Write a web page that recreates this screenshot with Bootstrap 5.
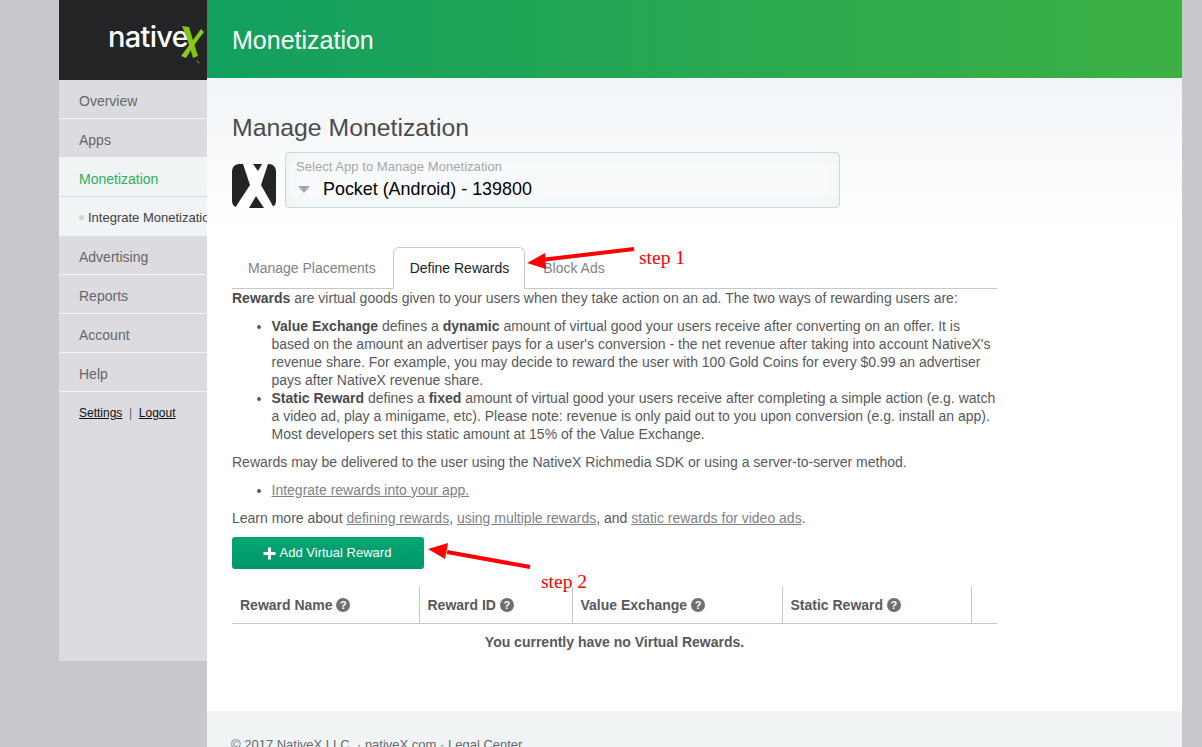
<!DOCTYPE html>
<html lang="en">
<head>
  <meta charset="UTF-8" />
  <title>Monetization</title>
  <link href="https://cdn.jsdelivr.net/npm/bootstrap@5.3.0/dist/css/bootstrap.min.css" rel="stylesheet" />
  <style>
    html, body { height: 100%; overflow: hidden; }
    body {
      background-color: #c8c7cc;
      font-family: "Liberation Sans", Arial, sans-serif;
      font-size: 14px;
      line-height: 18px;
      color: #58595b;
    }
    a { color: inherit; }

    .shell { width: 1123px; margin-left: 59px; position: relative; }

    .side { width: 148px; height: 661px; background: #dcdbe0; flex-shrink: 0; overflow: hidden; }
    .side-logo { height: 80px; background: #242426; padding: 19px 0 0 49px; }
    .logo-word { font-family: Inter, sans-serif; font-weight: 500; font-size: 29px; line-height: 36px; letter-spacing: -0.7px; color: #fff; }
    .side-link { display: block; height: 39px; line-height: 42px; padding-left: 20px; border-bottom: 1px solid #f0f4f5; color: #66676b; text-decoration: none; white-space: nowrap; }
    .side-link.is-on { background: #f0f4f5; color: #2fae5f; border-bottom-color: #dcdbe0; }
    .side-sub { display: block; height: 39px; line-height: 41px; padding-left: 29px; background: #f0f4f5; color: #3f4046; font-size: 13px; text-decoration: none; white-space: nowrap; position: relative; }
    .side-sub::before { content: ""; position: absolute; left: 20px; top: 18px; width: 5px; height: 5px; border-radius: 50%; background: #d4d4d8; }
    .side-foot { padding: 12px 0 0 20px; font-size: 12px; color: #66676b; }
    .side-foot a { color: #111; }

    .page { width: 975px; min-height: 800px; background: #fff; }
    .page-top { height: 78px; background: linear-gradient(90deg, #12a05f, #3cb043); color: #fff; font-size: 25px; line-height: 80px; padding-left: 25px; }
    .page-body { padding: 35px 185px 0 25px; height: 633px; background: linear-gradient(180deg, #f1f5f7 0, #fff 150px); }
    .page-title { font-size: 24.8px; line-height: 29px; margin: 0 0 10px; color: #4a4b4d; font-weight: 400; }

    .app-pick { height: 56px; width: 555px; margin-left: 9px; border: 1px solid #cfd8d8; border-radius: 4px; background: #f8fafb; box-shadow: inset 0 0 14px #e6f2ef; padding: 5px 10px; }
    .app-hint { color: #a6a7aa; font-size: 13.1px; line-height: 18px; }
    .app-value { color: #000; font-size: 17.9px; line-height: 24px; margin-top: 1px; }
    .app-caret { width: 0; height: 0; border-left: 6px solid transparent; border-right: 6px solid transparent; border-top: 7px solid #a6a7aa; margin: 0 13px 0 2px; }

    .tab-row { margin-top: 39px; border-bottom-color: #c6c8ca; }
    .tab-row .nav-link { padding: 11px 15px; line-height: 18px; margin-right: 2px; color: #808285; height: 42px; font-size: 14px; }
    .tab-row .nav-link.active { color: #222; background: #fff; border-color: #c6c8ca #c6c8ca #fff; margin-left: -1px; padding-left: 16px; }

    .txt p { margin: 0 0 10px; }
    .txt ul { margin: 0 0 10px; padding-left: 39.5px; }
    .txt a { color: #808285; }
    .txt b { color: #4a4b4d; }

    .add-btn { width: 192px; height: 32px; padding: 0 2px 0 0; background: linear-gradient(180deg, #04a574, #039768); border: 0; border-radius: 3px; color: #fff; font-size: 13px; line-height: 32px; }
    .add-btn:hover { background: #039768; color: #fff; }

    .reward-table { margin-top: 18px; margin-bottom: 0; table-layout: fixed; width: 765px; color: #58595b; }
    .reward-table th { height: 36px; padding: 0 8px; vertical-align: middle; border-bottom: 1px solid #c6c8ca; border-right: 1px solid #c6c8ca; font-size: 14px; white-space: nowrap; color: #58595b; background: transparent; }
    .reward-table th.col-end { border-right: 0; }
    .reward-table td { text-align: center; font-weight: 700; padding: 9px 0; border: 0; background: transparent; color: #58595b; }
    .help-dot { display: inline-block; width: 14px; height: 14px; border-radius: 50%; background: #6d6f71; color: #fff; font-size: 11px; line-height: 14px; text-align: center; font-weight: 700; vertical-align: 1px; }

    .page-foot { height: 89px; background: #f0f4f5; padding: 25px 0 0 24px; font-size: 13px; color: #66676b; }
    .page-foot a { color: inherit; text-decoration: none; }

    .note-arrow { position: absolute; left: 0; top: 0; pointer-events: none; }
    .step-note { position: absolute; color: #f00; font-family: "Liberation Serif", serif; font-size: 19.5px; line-height: 22px; }
  </style>
</head>
<body>
<div class="shell d-flex">
  <aside class="side">
    <div class="side-logo d-flex align-items-start">
      <span class="logo-word">native</span>
      <svg width="24" height="40" viewBox="0 0 24 40" class="flex-shrink-0" style="margin:6px 0 0 -8px">
        <path d="M2 1 L9 2 Q13 16 18 31 L13 33 Q8 15 2 1 Z" fill="#84c414"/>
        <path d="M21 4 L24 7 Q15 18 6 33 L1 31 Q11 18 21 4 Z" fill="#8ccb14"/>
        <path d="M17 35 L18 38 L20 37.500" fill="none" stroke="#5a7f12"/>
      </svg>
    </div>
    <a class="side-link" href="#">Overview</a>
    <a class="side-link" href="#">Apps</a>
    <a class="side-link is-on" href="#">Monetization</a>
    <a class="side-sub" href="#">Integrate Monetization</a>
    <a class="side-link" href="#">Advertising</a>
    <a class="side-link" href="#">Reports</a>
    <a class="side-link" href="#">Account</a>
    <a class="side-link" href="#">Help</a>
    <div class="side-foot"><a href="#">Settings</a> &nbsp;|&nbsp; <a href="#">Logout</a></div>
  </aside>

  <main class="page">
    <div class="page-top">Monetization</div>
    <div class="page-body">
      <h1 class="page-title">Manage Monetization</h1>
      <div class="d-flex align-items-end">
        <svg width="44" height="44" viewBox="0 0 44 44" class="flex-shrink-0">
          <clipPath id="iconClip"><rect width="44" height="44" rx="7"/></clipPath>
          <g clip-path="url(#iconClip)">
            <rect width="44" height="44" fill="#fff"/>
            <path d="M0 0 H11 L18 21 L3 44 H0 Z" fill="#242426"/>
            <path d="M36 0 H44 V44 H42 L29 21 Z" fill="#242426"/>
            <path d="M21 0 H30 L26 7 Z" fill="#242426"/>
            <path d="M17 44 H32 L24 32 Z" fill="#242426"/>
          </g>
        </svg>
        <div class="app-pick">
          <div class="app-hint">Select App to Manage Monetization</div>
          <div class="app-value d-flex align-items-center"><span class="app-caret"></span>Pocket (Android) - 139800</div>
        </div>
      </div>

      <ul class="nav nav-tabs tab-row">
        <li class="nav-item"><a class="nav-link" href="#">Manage Placements</a></li>
        <li class="nav-item"><a class="nav-link active" href="#">Define Rewards</a></li>
        <li class="nav-item"><a class="nav-link" href="#">Block Ads</a></li>
      </ul>

      <div class="txt">
        <p><b>Rewards</b> are virtual goods given to your users when they take action on an ad. The two ways of rewarding users are:</p>
        <ul>
          <li><b>Value Exchange</b> defines a <b>dynamic</b> amount of virtual good your users receive after converting on an offer. It is based on the amount an advertiser pays for a user's conversion - the net revenue after taking into account NativeX's revenue share. For example, you may decide to reward the user with 100 Gold Coins for every $0.99 an advertiser pays after NativeX revenue share.</li>
          <li><b>Static Reward</b> defines a <b>fixed</b> amount of virtual good your users receive after completing a simple action (e.g. watch a video ad, play a minigame, etc). Please note: revenue is only paid out to you upon conversion (e.g. install an app). Most developers set this static amount at 15% of the Value Exchange.</li>
        </ul>
        <p>Rewards may be delivered to the user using the NativeX Richmedia SDK or using a server-to-server method.</p>
        <ul>
          <li><a href="#">Integrate rewards into your app.</a></li>
        </ul>
        <p>Learn more about <a href="#">defining rewards</a>, <a href="#">using multiple rewards</a>, and <a href="#">static rewards for video ads</a>.</p>
      </div>

      <button class="btn add-btn d-flex align-items-center justify-content-center gap-1" type="button">
        <svg width="13" height="13" viewBox="0 0 13 13"><path d="M5 0.5 H8 V5 H12.5 V8 H8 V12.5 H5 V8 H0.5 V5 H5 Z" fill="#fff"/></svg>
        Add Virtual Reward
      </button>

      <table class="table reward-table">
        <colgroup>
          <col style="width:187px"><col style="width:153px"><col style="width:210px"><col style="width:189px"><col style="width:26px">
        </colgroup>
        <thead>
          <tr>
            <th>Reward Name <span class="help-dot">?</span></th>
            <th>Reward ID <span class="help-dot">?</span></th>
            <th>Value Exchange <span class="help-dot">?</span></th>
            <th>Static Reward <span class="help-dot">?</span></th>
            <th class="col-end"></th>
          </tr>
        </thead>
        <tbody>
          <tr><td colspan="5">You currently have no Virtual Rewards.</td></tr>
        </tbody>
      </table>
    </div>
    <div class="page-foot">© 2017 NativeX LLC. · <a href="#">nativeX.com</a> · <a href="#">Legal Center</a></div>
  </main>

  <!-- hand drawn annotations on top of the screenshot -->
  <svg class="note-arrow" width="1123" height="747" viewBox="59 0 1123 747">
    <path d="M634 249 L545 259.500" stroke="#f00" stroke-width="4" fill="none"/>
    <path d="M527 263 L545 253 L546 269 Z" fill="#f00"/>
    <path d="M530 567 L447 552" stroke="#f00" stroke-width="4" fill="none"/>
    <path d="M428 549 L448 543 L445 559 Z" fill="#f00"/>
  </svg>
  <span class="step-note" style="left:580px;top:247px">step 1</span>
  <span class="step-note" style="left:482px;top:571px">step 2</span>
</div>
<script src="https://cdn.jsdelivr.net/npm/bootstrap@5.3.0/dist/js/bootstrap.bundle.min.js"></script>
</body>
</html>
